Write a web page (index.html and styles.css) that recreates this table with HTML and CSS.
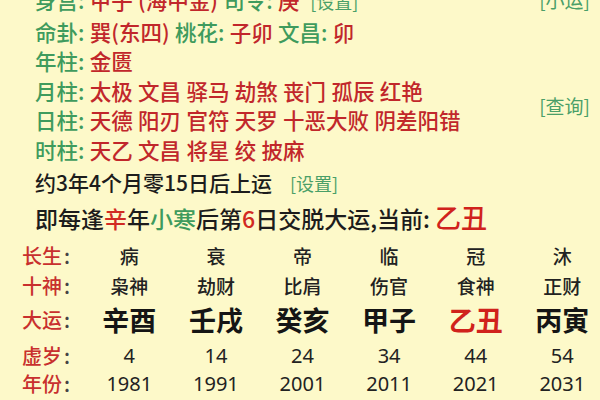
FILE: index.html
```html
<!DOCTYPE html>
<html lang="zh">
<head>
<meta charset="utf-8">
<link rel="stylesheet" href="styles.css">
</head>
<body>
<div class="page">
  <div class="info">
    <div class="line"><span class="k">身宫:</span> <span class="v">甲子 (海中金)</span> <span class="k">司令:</span> <span class="v">庚</span>  <span class="btn">[设置]</span></div>
    <div class="side side-top">[小运]</div>
    <div class="line"><span class="k">命卦:</span> <span class="v">巽(东四)</span> <span class="k">桃花:</span> <span class="v">子卯</span> <span class="k">文昌:</span> <span class="v">卯</span></div>
    <div class="line"><span class="k">年柱:</span> <span class="v">金匮</span></div>
    <div class="line"><span class="k">月柱:</span> <span class="v">太极 文昌 驿马 劫煞 丧门 孤辰 红艳</span></div>
    <div class="side side-mid">[查询]</div>
    <div class="line"><span class="k">日柱:</span> <span class="v">天德 阳刃 官符 天罗 十恶大败 阴差阳错</span></div>
    <div class="line"><span class="k">时柱:</span> <span class="v">天乙 文昌 将星 绞 披麻</span></div>
  </div>
  <div class="luck">约3年4个月零15日后上运<span class="btn small">[设置]</span></div>
  <div class="luck luck2">即每逢<span class="red">辛</span>年<span class="green">小寒</span>后第<span class="red">6</span>日交脱大运,当前: <span class="cur">乙丑</span></div>
  <div class="table">
    <div class="lab">长生<span class="colon">:</span></div>
    <div class="cell">病</div><div class="cell">衰</div><div class="cell">帝</div><div class="cell">临</div><div class="cell">冠</div><div class="cell">沐</div>
    <div class="lab">十神<span class="colon">:</span></div>
    <div class="cell">枭神</div><div class="cell">劫财</div><div class="cell">比肩</div><div class="cell">伤官</div><div class="cell">食神</div><div class="cell">正财</div>
    <div class="lab">大运<span class="colon">:</span></div>
    <div class="cell big">辛酉</div><div class="cell big">壬戌</div><div class="cell big">癸亥</div><div class="cell big">甲子</div><div class="cell big now">乙丑</div><div class="cell big">丙寅</div>
    <div class="lab">虚岁<span class="colon">:</span></div>
    <div class="cell num">4</div><div class="cell num">14</div><div class="cell num">24</div><div class="cell num">34</div><div class="cell num">44</div><div class="cell num">54</div>
    <div class="lab">年份<span class="colon">:</span></div>
    <div class="cell num">1981</div><div class="cell num">1991</div><div class="cell num">2001</div><div class="cell num">2011</div><div class="cell num">2021</div><div class="cell num">2031</div>
  </div>
</div>
</body>
</html>
```
FILE: styles.css
```css
html, body {
  margin: 0;
  padding: 0;
  width: 600px;
  height: 400px;
  overflow: hidden;
  background: #fdf9c9;
}
.page {
  font-family: "Noto Sans CJK SC", "Noto Sans", sans-serif;
  color: #1c1c1c;
}
.info {
  display: grid;
  grid-template-columns: 1fr auto;
  margin-top: -15px;
  padding-left: 35px;
  padding-right: 10px;
  font-size: 21.5px;
  font-weight: 500;
  line-height: 29.6px;
  white-space: pre;
}
.line {
  grid-column: 1;
  word-spacing: 0.5px;
}
.k { color: #3f9b5d; }
.v { color: #c1272b; }
.btn {
  color: #4a9f68;
  font-size: 18px;
  font-weight: 400;
}
.side {
  grid-column: 2;
  color: #4a9f68;
  font-size: 19px;
  font-weight: 400;
}
.side-top { grid-row: 1; }
.side-mid { grid-row: 4 / 6; align-self: center; }
.luck {
  padding-left: 35px;
  font-size: 21px;
  font-weight: 500;
  line-height: 30px;
  margin-top: 2px;
  white-space: pre;
}
.luck .small { font-size: 18px; padding-left: 18px; }
.luck2 {
  font-size: 23px;
  line-height: 32px;
  margin-top: 3px;
}
.red { color: #d12a22; }
.green { color: #3f9b5d; }
.cur {
  color: #d0221c;
  font-size: 26px;
}
.table {
  display: grid;
  grid-template-columns: 64px repeat(6, 86.6px);
  grid-template-rows: 30px 30px 38px 34px 22px;
  padding-left: 22px;
  margin-top: 7px;
  align-items: center;
}
.lab {
  color: #c8302e;
  font-size: 20px;
  font-weight: 500;
  line-height: 30px;
}
.colon {
  color: #444;
  padding-left: 2px;
}
.cell {
  text-align: center;
  font-size: 19px;
  font-weight: 500;
  line-height: 30px;
  color: #222;
}
.big {
  font-size: 27px;
  font-weight: 700;
  line-height: 38px;
  color: #151515;
}
.big.now { color: #d0221c; }
.num {
  font-size: 20px;
  font-weight: 400;
  font-family: "Noto Sans", "Noto Sans CJK SC", sans-serif;
}
```
